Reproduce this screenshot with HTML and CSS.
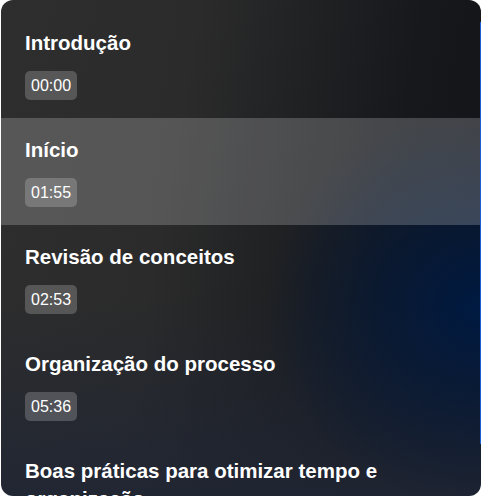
FILE: index.html
```html
<!DOCTYPE html>
<html lang="pt-BR">
<head>
    <meta charset="UTF-8">
    <meta name="viewport" content="width=device-width, initial-scale=1.0">
    <title>Capítulos</title>
    <link rel="stylesheet" href="styles.css">
</head>
<body>

    <!-- Lista de capítulos do vídeo -->
    <div class="chapters">
        <div class="chapter">
            <h3>Introdução</h3>
            <span class="time">00:00</span>
        </div>
        <div class="chapter active">
            <h3>Início</h3>
            <span class="time">01:55</span>
        </div>
        <div class="chapter">
            <h3>Revisão de conceitos</h3>
            <span class="time">02:53</span>
        </div>
        <div class="chapter">
            <h3>Organização do processo</h3>
            <span class="time">05:36</span>
        </div>
        <div class="chapter">
            <h3>Boas práticas para otimizar tempo e organização</h3>
            <span class="time">08:12</span>
        </div>
    </div>

</body>
</html>
```

FILE: styles.css
```css
body {
    margin: 0;
    background-color: #ffffff;
    font-family: "Liberation Sans", Arial, sans-serif;
}

.chapters {
    position: relative;
    margin: 0 1px 0 1px;
    height: 496px;
    padding-top: 11px;
    box-sizing: border-box;
    overflow: hidden;
    border-radius: 12px;
    background:
        radial-gradient(ellipse 45% 40% at 100% 62%, rgba(0, 26, 66, 1) 0%, rgba(0, 26, 66, 0) 100%),
        linear-gradient(to bottom, rgba(20, 20, 20, 0) 60%, rgba(32, 38, 52, 0.9) 100%),
        linear-gradient(100deg, #2e2e2e 0%, #2b2b2b 35%, #16181c 75%, #121316 100%);
}

/* linha azul na borda direita */
.chapters::after {
    content: "";
    position: absolute;
    right: 0;
    top: 22px;
    bottom: 52px;
    width: 1px;
    background-color: #1d5fd1;
}

.chapter {
    padding: 18px 24px 18px 24px;
}

.chapter.active {
    background-color: rgba(255, 255, 255, 0.2);
}

.chapter h3 {
    margin: 0 0 14px 0;
    font-size: 20.5px;
    line-height: 28px;
    font-weight: bold;
    color: #ffffff;
}

.time {
    display: inline-block;
    padding: 5px 6px;
    font-size: 16px;
    line-height: 19px;
    color: #ffffff;
    background-color: rgba(255, 255, 255, 0.2);
    border-radius: 5px;
}
```
